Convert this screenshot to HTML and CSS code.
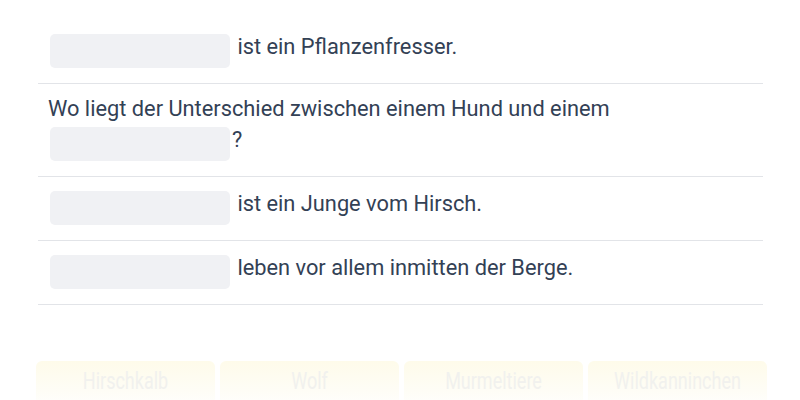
FILE: index.html
```html
<!DOCTYPE html>
<html lang="de">
<head>
<meta charset="utf-8">
<link rel="stylesheet" href="styles.css">
</head>
<body>
<div class="quiz">
  <ul class="questions">
    <li class="row"><span class="blank"></span> ist ein Pflanzenfresser.</li>
    <li class="row">Wo liegt der Unterschied zwischen einem Hund und einem <span class="blank"></span>?</li>
    <li class="row"><span class="blank"></span> ist ein Junge vom Hirsch.</li>
    <li class="row"><span class="blank"></span> leben vor allem inmitten der Berge.</li>
  </ul>
  <div class="choices">
    <div class="tile"><span class="label">Hirschkalb</span></div>
    <div class="tile"><span class="label">Wolf</span></div>
    <div class="tile"><span class="label">Murmeltiere</span></div>
    <div class="tile"><span class="label">Wildkanninchen</span></div>
  </div>
</div>
</body>
</html>
```
FILE: styles.css
```css
html, body {
  margin: 0;
  padding: 0;
  background: #ffffff;
}
body {
  font-family: Roboto, "Liberation Sans", sans-serif;
  color: #334155;
  overflow: hidden;
  height: 400px;
}
.quiz {
  padding: 20px 37px 0 38px;
}
.questions {
  list-style: none;
  margin: 0;
  padding: 0;
}
.row {
  font-size: 21.8px;
  line-height: 29px;
  padding: 10px 10px 11px 10px;
  border-bottom: 1px solid #e2e4e8;
}
.blank {
  display: inline-block;
  width: 180px;
  height: 34px;
  margin: 4px 2px;
  border-radius: 5px;
  background: #f0f1f4;
  vertical-align: -18px;
}
.choices {
  display: grid;
  grid-template-columns: repeat(4, 1fr);
  gap: 5px;
  margin: 56px -4px 0 -2px;
}
.tile {
  height: 50px;
  border-radius: 6px;
  background: linear-gradient(#fefbea, #fefdf6 60%, #ffffff);
  color: #f1f1ee;
  font-size: 18px;
  line-height: 30px;
  padding-top: 5px;
  text-align: center;
  box-sizing: border-box;
}
.label {
  display: inline-block;
  transform: scaleY(1.35);
}
```
